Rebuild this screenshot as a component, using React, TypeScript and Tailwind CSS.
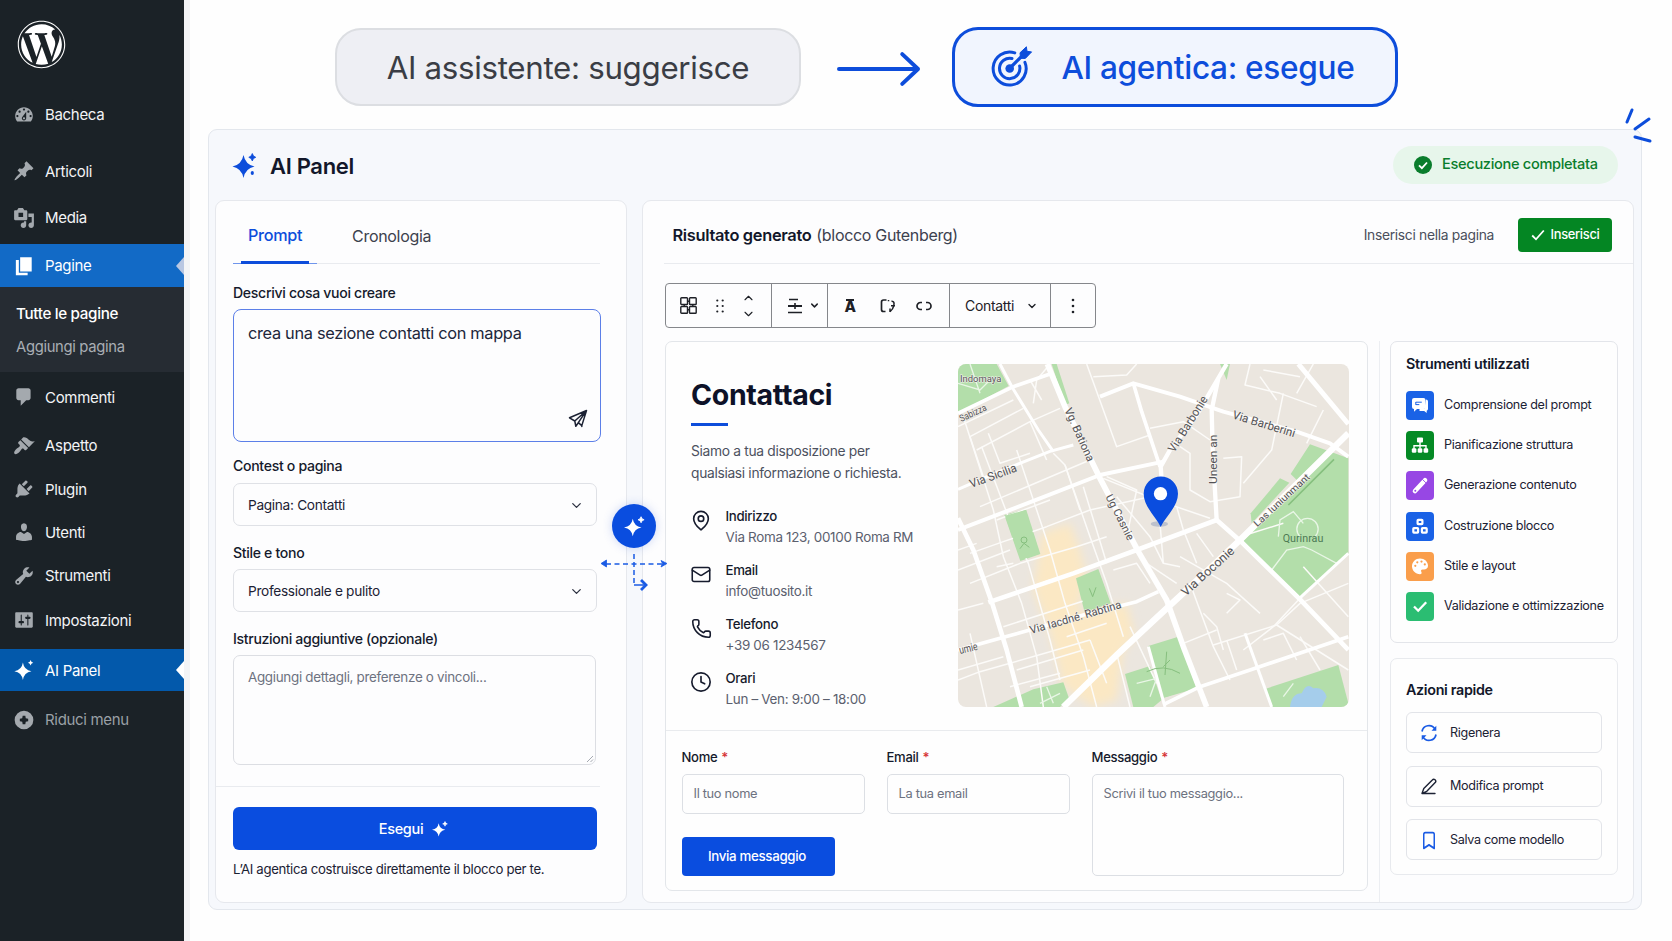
import React from "react";
import { FaWordpress } from "react-icons/fa";
import { ChevronDown, ChevronUp, MapPin, Mail, Phone, Clock, Bookmark } from "lucide-react";

const icons = {
  dashboard:
    "M3.76 16h12.48c1.1-1.37 1.76-3.11 1.76-5 0-4.42-3.58-8-8-8s-8 3.58-8 8c0 1.89.66 3.63 1.76 5zM10 4c.55 0 1 .45 1 1s-.45 1-1 1-1-.45-1-1 .45-1 1-1zM6 6c.55 0 1 .45 1 1s-.45 1-1 1-1-.45-1-1 .45-1 1-1zm8 0c.55 0 1 .45 1 1s-.45 1-1 1-1-.45-1-1 .45-1 1-1zm-5.37 5.55L12 7v6c0 1.1-.9 2-2 2s-2-.9-2-2c0-.57.24-1.08.63-1.45zM4 10c.55 0 1 .45 1 1s-.45 1-1 1-1-.45-1-1 .45-1 1-1zm12 0c.55 0 1 .45 1 1s-.45 1-1 1-1-.45-1-1 .45-1 1-1zm-5 3c0-.55-.45-1-1-1s-1 .45-1 1 .45 1 1 1 1-.45 1-1z",
  post: "M10.44 3.02l1.82-1.82 6.36 6.35-1.83 1.82c-1.05-.68-2.48-.57-3.41.36l-.75.75c-.92.93-1.04 2.35-.35 3.41l-1.83 1.82-2.41-2.41-2.8 2.79c-.42.42-3.38 2.71-3.8 2.29s1.86-3.39 2.28-3.81l2.79-2.79L4.1 9.36l1.83-1.82c1.05.69 2.48.57 3.4-.36l.75-.75c.93-.92 1.05-2.35.36-3.41z",
  media:
    "M13 11V4c0-.55-.45-1-1-1h-1.67L9 1H5L3.67 3H2c-.55 0-1 .45-1 1v7c0 .55.45 1 1 1h10c.55 0 1-.45 1-1zM5 5.200h4.200v4H5zM14 6h5v10.500c0 1.38-1.12 2.500-2.500 2.500S14 17.88 14 16.500s1.12-2.500 2.500-2.500c.17 0 .34.02.5.05V9h-3V6zm-4 8.050V13h2v3.500c0 1.38-1.12 2.500-2.500 2.500S7 17.88 7 16.500 8.120 14 9.500 14c.17 0 .34.02.5.05z",
  page: "M6.500 15V2H17v13H6.500zM5.300 16.200h8V18.400H2.600V4.600h2.700v11.600z",
  comments:
    "M5 2h9c1.1 0 2 .9 2 2v7c0 1.1-.9 2-2 2h-2l-5 5v-5H5c-1.1 0-2-.9-2-2V4c0-1.1.9-2 2-2z",
  appearance:
    "M14.48 11.06L7.41 3.99l1.5-1.5c.5-.56 2.3-.47 3.51.32 1.21.8 1.43 1.28 2.91 2.1 1.18.64 2.45 1.26 4.45.85zm-.71.71L6.7 4.7 4.93 6.47c-.39.39-.39 1.02 0 1.41l1.06 1.06c.39.39.39 1.03 0 1.42-.6.6-1.43 1.11-2.21 1.69-.35.26-.7.53-1.01.84C1.43 14.23.4 16.08 1.4 17.07c.99 1 2.84-.03 4.18-1.36.31-.31.58-.66.85-1.02.57-.78 1.08-1.61 1.69-2.21.39-.39 1.02-.39 1.41 0l1.06 1.06c.39.39 1.02.39 1.41 0z",
  plugins:
    "M13.11 4.36L9.87 7.6 8 5.73l3.24-3.24c.35-.34 1.05-.2 1.56.32.52.51.66 1.21.31 1.55zm-8 1.77l.91-1.12 9.01 9.01-1.19.84c-.71.71-2.63 1.16-3.82 1.16H6.14L4.9 17.26c-.59.59-1.54.59-2.12 0-.59-.58-.59-1.53 0-2.12l1.24-1.24v-3.88c0-1.13.4-3.19 1.09-3.89zm7.26 3.97l3.24-3.24c.34-.35 1.04-.21 1.55.31.52.51.66 1.21.31 1.55l-3.24 3.25z",
  users:
    "M10 9.25c-2.27 0-2.73-3.44-2.73-3.44C7 4.02 7.82 2 9.97 2c2.16 0 2.98 2.02 2.71 3.81 0 0-.41 3.44-2.68 3.44zm0 2.57L12.72 10c2.39 0 4.52 2.33 4.52 4.53v2.49s-3.65 1.13-7.24 1.13c-3.65 0-7.24-1.13-7.24-1.13v-2.49c0-2.25 1.94-4.48 4.47-4.48z",
  tools:
    "M16.68 9.77c-1.34 1.34-3.3 1.67-4.95.99l-5.41 6.52c-.99.99-2.59.99-3.58 0s-.99-2.59 0-3.57l6.52-5.42c-.68-1.65-.35-3.61.99-4.95 1.28-1.28 3.12-1.62 4.72-1.06l-2.89 2.89 2.82 2.82 2.86-2.87c.53 1.58.18 3.39-1.08 4.65zM3.81 16.21c.4.39 1.04.39 1.43 0 .4-.4.4-1.04 0-1.43-.39-.4-1.03-.4-1.43 0-.39.39-.39 1.03 0 1.43z",
  settings:
    "M18 16V4c0-.55-.45-1-1-1H3c-.55 0-1 .45-1 1v12c0 .55.45 1 1 1h14c.55 0 1-.45 1-1zM8 11h1c.55 0 1 .45 1 1s-.45 1-1 1H8v1.5c0 .28-.22.5-.5.5s-.5-.22-.5-.5V13H6c-.55 0-1-.45-1-1s.45-1 1-1h1V5.5c0-.28.22-.5.5-.5s.5.22.5.5V11zm5-2h-1c-.55 0-1-.45-1-1s.45-1 1-1h1V5.5c0-.28.22-.5.5-.5s.5.22.5.5V7h1c.55 0 1 .45 1 1s-.45 1-1 1h-1v5.5c0 .28-.22.5-.5.5s-.5-.22-.5-.5V9z",
  sparkle:
    "M9 3.2Q10 10 16.8 11.2Q10 12.400 9 19.200Q8 12.400 1.200 11.200Q8 10 9 3.200zM16 1Q16.300 3 18.400 3.400Q16.300 3.800 16 5.800Q15.600 3.800 13.600 3.400Q15.700 3 16 1z",
  collapse:
    "M10 1.500a8.500 8.500 0 1 0 0 17a8.500 8.500 0 1 0 0-17zM8.800 6.200h2.400l.4 2.200 2.200.4v2.400l-2.200.4-.4 2.200H8.800l-.4-2.200-2.200-.4V8.800l2.200-.4z",
};

type IconName = keyof typeof icons;

function WpIcon({ name, className }: { name: IconName; className: string }) {
  return (
    <svg viewBox="0 0 20 20" className={className} fill="currentColor" fillRule="evenodd">
      <path d={icons[name]} />
    </svg>
  );
}

function Sparkle({ className }: { className: string }) {
  return (
    <svg viewBox="0 0 24 24" className={className} fill="currentColor">
      <path d="M10 3.200Q11.400 11.700 20 13.200Q11.400 14.700 10 23.200Q8.600 14.700 0 13.200Q8.600 11.700 10 3.200z" />
      <path
        d="M19.500 .8Q20 3.700 23 4.300Q20 4.900 19.500 7.800Q19 4.900 16 4.300Q19 3.700 19.500 .8z"
        stroke="currentColor"
        strokeWidth=".9"
      />
    </svg>
  );
}

interface NavItemProps {
  name: IconName;
  label: string;
  row: string;
  tone?: string;
  icon?: string;
}

function NavItem({ name, label, row, tone = "text-[#f3f4f6]", icon = "text-[#a4a9ae]" }: NavItemProps) {
  return (
    <a className={`relative flex shrink-0 items-center pl-[13px] ${row} ${tone}`}>
      <WpIcon name={name} className={`size-[22px] shrink-0 ${icon}`} />
      <span className="ml-[10px] mt-[2px] text-[15px]">{label}</span>
    </a>
  );
}

function Notch({ className }: { className: string }) {
  return (
    <svg
      viewBox="0 0 8 18"
      className={`absolute right-0 top-1/2 h-[18px] w-2 -translate-y-1/2 ${className}`}
      fill="currentColor"
    >
      <path d="M8 0v18L0 9z" />
    </svg>
  );
}

function Sidebar() {
  return (
    <nav className="flex h-full w-[184px] shrink-0 flex-col bg-[#1b2227]">
      <div className="flex h-[86px] items-start pl-[16.500px] pt-[20px] text-white">
        <FaWordpress className="size-[49px]" />
      </div>
      <NavItem name="dashboard" label="Bacheca" row="h-[57px]" />
      <NavItem name="post" label="Articoli" row="h-[56px]" />
      <NavItem name="media" label="Media" row="h-[37px]" />
      <div className="relative mt-[8px]">
        <NavItem name="page" label="Pagine" row="h-[43px] bg-[#126ac6]" tone="text-white" icon="text-white" />
        <Notch className="text-[#b9c7e2]" />
      </div>
      <div className="flex h-[85px] flex-col bg-[#262c33] pl-[16px] pt-[10px]">
        <a className="flex h-[34px] items-center text-[15.200px] font-medium text-white">Tutte le pagine</a>
        <a className="flex h-[33px] items-center text-[14.800px] text-[#a9aeb4]">Aggiungi pagina</a>
      </div>
      <NavItem name="comments" label="Commenti" row="h-[50px]" />
      <NavItem name="appearance" label="Aspetto" row="h-[47px]" />
      <NavItem name="plugins" label="Plugin" row="h-[40px]" />
      <NavItem name="users" label="Utenti" row="h-[46px]" />
      <NavItem name="tools" label="Strumenti" row="h-[41px]" />
      <NavItem name="settings" label="Impostazioni" row="h-[48px]" />
      <div className="relative mt-[5px]">
        <NavItem name="sparkle" label="AI Panel" row="h-[42px] bg-[#0359ab]" tone="text-white" icon="text-white" />
        <Notch className="text-white" />
      </div>
      <NavItem name="collapse" label="Riduci menu" row="h-[57px]" tone="text-[#9aa0a6]" icon="text-[#a4a9ae]" />
    </nav>
  );
}

function TargetIcon() {
  return (
    <svg
      viewBox="0 0 44 44"
      className="mb-[3px] size-[44px]"
      fill="none"
      stroke="#0d4ddb"
      strokeWidth="3"
      strokeLinecap="round"
    >
      <path d="M25.800 8.900A16.500 16.500 0 1 0 35.900 18.300" />
      <path d="M23 14.500A10.200 10.200 0 1 0 30.600 22" />
      <circle cx="20.700" cy="24.500" r="4.300" fill="#0d4ddb" stroke="none" />
      <path d="M21 24L35 10" strokeWidth="3.200" />
      <path
        d="M31.500 14L31 8.800L37.400 2.800L38 7.300L42.600 7.900L36.600 14.200z"
        fill="#0d4ddb"
        strokeWidth="1"
        strokeLinejoin="round"
      />
    </svg>
  );
}

function TopBanner() {
  return (
    <div className="flex h-[81px] items-center">
      <div className="ml-[127px] mt-px flex h-[78px] w-[466px] items-center justify-center rounded-[26px] border-2 border-[#dcdee2] bg-[#eeeff4] pt-[2px] text-[31.300px] tracking-[-0.01em] text-[#3a3d45]">
        AI assistente: suggerisce
      </div>
      <svg
        viewBox="0 0 86 36"
        className="ml-[36px] mr-px mt-[4px] h-[36px] w-[85px]"
        fill="none"
        stroke="#0d4ddb"
        strokeWidth="4"
        strokeLinecap="round"
        strokeLinejoin="round"
      >
        <path d="M2 18H82M66 3L82 18L66 33" />
      </svg>
      <div className="ml-[29px] flex h-[80px] w-[446px] items-center rounded-[26px] border-[3px] border-[#0d4ddb] bg-[#f1f5fe] pl-[34px] pt-[2px] text-[31.600px] font-medium tracking-[-0.01em] text-[#0d4ddb]">
        <TargetIcon />
        <span className="ml-[28.500px]">AI agentica: esegue</span>
      </div>
    </div>
  );
}

function Label({ className, children }: { className: string; children: React.ReactNode }) {
  return (
    <label
      className={`flex shrink-0 items-end text-[14.100px] font-medium leading-[20px] text-[#151a2c] ${className}`}
    >
      {children}
    </label>
  );
}

function Select({ children }: { children: React.ReactNode }) {
  return (
    <div className="flex h-[43px] w-[364px] shrink-0 items-center justify-between rounded-[7px] border border-[#dfe1e6] pl-[14px] pr-[12px] pt-px text-[13.700px] text-[#1c2234]">
      <span>{children}</span>
      <ChevronDown className="size-[15px] text-[#2b3040]" strokeWidth={2} />
    </div>
  );
}

function PromptCard() {
  return (
    <section className="flex h-[703px] w-[412px] flex-col rounded-[9px] border border-[#e6e8ed] bg-[#fdfdfe] pl-[17px]">
      <div className="relative flex h-[63px] w-[367px] shrink-0 items-center border-b border-[#e9ebef] pl-[15px] text-[16.200px]">
        <span className="mt-[7px] font-medium text-[#0d4ddb]">Prompt</span>
        <span className="ml-[50px] mt-[7px] text-[16px] text-[#3c414d]">Cronologia</span>
        <span className="absolute -bottom-px left-0 h-px w-[84px] bg-[#6f95ec]" />
        <span className="absolute -bottom-px left-[8px] h-[3px] w-[68px] bg-[#0d4ddb]" />
      </div>
      <Label className="h-[45px] pb-[6px]">Descrivi cosa vuoi creare</Label>
      <div className="flex h-[133px] w-[368px] shrink-0 flex-col justify-between rounded-[8px] border-[1.500px] border-[#5c7fe8] pb-[12px] pl-[14px] pr-[12px] pt-[11px] text-[16.350px] text-[#20263a]">
        <p className="leading-[24px]">crea una sezione contatti con mappa</p>
        <svg
          viewBox="0 0 20 20"
          className="size-[20px] self-end"
          fill="none"
          stroke="#1c2234"
          strokeWidth="1.500"
          strokeLinejoin="round"
          strokeLinecap="round"
        >
          <path d="M18.500 1.500L1.500 8.800L6.800 12L18.500 1.500L13.800 16.600L10.300 13.700L7.800 17.300L6.800 12M10.300 13.700L18.500 1.500M13.800 16.600V17.600" />
        </svg>
      </div>
      <Label className="h-[41px] pb-[7px]">Contest o pagina</Label>
      <Select>Pagina: Contatti</Select>
      <Label className="h-[43px] pb-[6px]">Stile e tono</Label>
      <Select>Professionale e pulito</Select>
      <Label className="h-[43px] pb-[6px]">Istruzioni aggiuntive (opzionale)</Label>
      <div className="flex h-[110px] w-[363px] shrink-0 flex-col justify-between rounded-[7px] border border-[#dcdee3] pl-[14px] pt-[11px] text-[13.450px] text-[#6d7280]">
        <p className="leading-[20px]">Aggiungi dettagli, preferenze o vincoli...</p>
        <svg viewBox="0 0 8 8" className="mb-px mr-px size-[8px] self-end" fill="none" stroke="#a5a9b1" strokeWidth="1">
          <path d="M1 7L7 1M4.500 7L7 4.500" />
        </svg>
      </div>
      <div className="-ml-[17px] mt-[21px] h-px w-[384px] shrink-0 bg-[#e9ebef]" />
      <button className="mt-[20px] flex h-[43px] w-[364px] shrink-0 items-center justify-center rounded-[6px] bg-[#0a4ddf] pr-[3px] text-[14.500px] font-medium text-white">
        Esegui
        <Sparkle className="ml-[9px] size-[16px]" />
      </button>
      <p className="mt-[9px] text-[13.200px] leading-[20px] text-[#1b2133]">
        L’AI agentica costruisce direttamente il blocco per te.
      </p>
    </section>
  );
}

function Toolbar() {
  const cell = "flex h-full items-center border-r border-[#85878b]";
  return (
    <div className="ml-px flex h-[45px] w-[431px] items-center rounded-[4px] border border-[#85878b] text-[#1e2026]">
      <div className={`${cell} w-[106px] pl-[14px]`}>
        <svg viewBox="0 0 17 17" className="size-[17px]" fill="none" stroke="currentColor" strokeWidth="1.400">
          <rect x=".8" y=".8" width="6.700" height="6.700" rx=".8" />
          <rect x="9.500" y=".8" width="6.700" height="6.700" rx=".8" />
          <rect x=".8" y="9.500" width="6.700" height="6.700" rx=".8" />
          <rect x="9.500" y="9.500" width="6.700" height="6.700" rx=".8" />
          <path d="M7.500 4.200h2M7.500 12.800h2M4.200 7.500v2M12.800 7.500v2" />
        </svg>
        <svg viewBox="0 0 8 14" className="ml-[19px] h-[14px] w-[8px]" fill="currentColor">
          {[1.5, 7, 12.5].map((y) => (
            <g key={y}>
              <circle cx="1.300" cy={y} r="1.100" />
              <circle cx="6.700" cy={y} r="1.100" />
            </g>
          ))}
        </svg>
        <div className="ml-[17px] flex flex-col items-center gap-[2px]">
          <ChevronUp className="h-[14px] w-[15px]" strokeWidth={1.9} />
          <ChevronDown className="h-[14px] w-[15px]" strokeWidth={1.9} />
        </div>
      </div>
      <div className={`${cell} w-[56px] pl-[15px]`}>
        <svg viewBox="0 0 16 16" className="size-[16px]" stroke="currentColor" strokeWidth="1.600" fill="none">
          <path d="M2 1.500h9M1 14.500h14" strokeWidth="1.500" />
          <path d="M1 8h14" strokeWidth="2" />
          <path d="M8 5v6" />
        </svg>
        <ChevronDown className="ml-[6px] size-[11px]" strokeWidth={3.2} />
      </div>
      <div className={`${cell} w-[122px] pl-[17px]`}>
        <span className="relative mt-[2px] flex w-[10px] justify-center text-[15px] font-extrabold leading-none">
          A
          <span className="absolute top-0 left-[1px] h-[2px] w-[8px] bg-current" />
        </span>
        <svg
          viewBox="0 0 16 14"
          className="ml-[25px] h-[14px] w-[16px]"
          fill="none"
          stroke="currentColor"
          strokeWidth="1.700"
        >
          <path d="M6.500 1H3.500A2 2 0 0 0 1.500 3V10.500A2 2 0 0 0 3.500 12.500H5.500" />
          <path d="M8.500 1V2.200M11.500 2.200C14 2 14.500 4 13.700 6.800C13.200 9.500 12 11 10 12.700M10 9.500V13M11 6.800h4" strokeWidth="1.500" />
        </svg>
        <svg
          viewBox="0 0 16 10"
          className="ml-[20px] h-[10px] w-[16px]"
          fill="none"
          stroke="currentColor"
          strokeWidth="1.700"
        >
          <path d="M6 1.500H4.500A3.500 3.500 0 0 0 4.500 8.500H6M10 1.500H11.500A3.500 3.500 0 0 1 11.500 8.500H10" />
        </svg>
      </div>
      <div className={`${cell} w-[101px] pl-[15px] text-[14px]`}>
        Contatti
        <ChevronDown className="ml-[12px] size-[12px]" strokeWidth={2.7} />
      </div>
      <div className="flex h-full flex-1 items-center justify-center">
        <svg viewBox="0 0 4 16" className="h-[16px] w-[4px]" fill="currentColor">
          <circle cx="2" cy="2" r="1.300" />
          <circle cx="2" cy="8" r="1.300" />
          <circle cx="2" cy="14" r="1.300" />
        </svg>
      </div>
    </div>
  );
}

const minorStreets = [
  "M40 200L130 480L160 620L215 760L260 920L280 1071",
  "M95 290L190 540L235 640L300 870L330 990",
  "M200 300L300 600L345 760L400 920L440 1071",
  "M310 310L345 345L420 560L470 700L520 860",
  "M345 345L390 480M400 410L470 640",
  "M24 230L190 150M60 260L220 175M80 300L240 215L330 175",
  "M60 260L100 380M115 250L150 340L240 310M240 215L290 330",
  "M90 470L420 330M140 510L300 450M60 610L160 575L290 530L420 480L600 440",
  "M24 660L180 600M60 700L210 640L380 590L470 560",
  "M24 780L100 760M180 735L300 690M160 830L440 740M24 960L160 920",
  "M60 850L110 1071M24 990L90 965L180 940L300 905L420 870",
  "M200 960L400 900M240 1010L420 960M180 1010L330 970M350 860L470 820",
  "M410 42L500 290L600 255M450 140L550 100M430 80L530 75L560 42",
  "M600 235L700 215L780 270M690 290L720 310L720 420L780 455L870 440L875 320L820 325",
  "M900 42L885 105L990 130L1100 170M930 80L980 150M940 60L1050 80",
  "M1000 130L965 300L880 400M1090 42L1040 130M1120 180L1070 280",
  "M460 385L620 450L780 505M470 380L560 420L530 560M680 470L700 540L740 640",
  "M500 440L600 560L640 640M560 605L590 640L680 700M740 550L790 620M630 520L640 640L690 650",
  "M690 620L830 700L930 790M760 790L800 830L820 900M830 730L870 750L830 790",
  "M720 700L790 890L840 990M790 885L980 825L1050 760L1195 700M870 560L1000 520",
  "M1050 745L970 830L880 900M980 825L1195 960M1060 650L1195 800M830 870L860 960",
  "M490 660L560 640L600 700M540 830L620 1000M500 910L540 1071M420 870L470 1000",
  "M700 880L800 840M1050 860L1110 960M940 870L1000 850L1040 930",
  "M300 42L260 90L250 160M240 90L275 150M24 600L80 580M140 650L190 640",
];

const mainStreets: [string, number][] = [
  ["M24 190L190 110L300 72", 11],
  ["M150 42L190 118L265 240L310 305", 9],
  ["M292 42L345 170L450 385L565 605L650 750L700 890L770 1071", 17],
  ["M24 418L130 372L300 304L370 285", 9],
  ["M24 540L270 445L450 375L640 335", 12],
  ["M24 505L70 600L125 755L170 900L215 1071", 14],
  ["M115 757L370 670L560 600L800 510", 14],
  ["M24 900L150 865L400 795L560 755L625 725", 11],
  ["M340 1071L500 915L650 775L780 655L870 570L1195 250", 19],
  ["M830 42L740 195L660 300L632 350L635 390", 13],
  ["M805 85L785 180L788 300L800 510", 13],
  ["M450 140L550 100L690 140L820 185L1040 245L1140 280L1195 320", 12],
  ["M550 100L575 185L630 350", 11],
  ["M800 510L870 572L1050 748L1195 900", 14],
  ["M1045 748L1195 610", 9],
  ["M1045 42L1195 222", 15],
  ["M640 1064L750 1010L900 960L1195 860", 11],
  ["M885 850L965 1071", 9],
  ["M595 890L645 1071", 9],
];

interface MapLabelProps {
  x: number;
  y: number;
  r: number;
  size: number;
  length: number;
  children: string;
}

function MapLabel({ x, y, r, size, length, children }: MapLabelProps) {
  return (
    <text
      transform={`translate(${x} ${y}) rotate(${r})`}
      fontSize={size}
      textLength={length}
      lengthAdjust="spacingAndGlyphs"
      fill="#535256"
      stroke="#f5f2ed"
      strokeWidth="3"
      paintOrder="stroke"
      letterSpacing="0"
      className="font-['Roboto']"
    >
      {children}
    </text>
  );
}

function CityMap() {
  return (
    <div className="mt-[22px] h-[343px] w-[391px] overflow-hidden rounded-[8px]">
      <svg viewBox="24 42 1173 1029" className="h-full w-full" preserveAspectRatio="none">
        <defs>
          <filter id="soft" x="-20%" y="-20%" width="140%" height="140%">
            <feGaussianBlur stdDeviation="14" />
          </filter>
        </defs>
        <rect x="24" y="42" width="1173" height="1029" fill="#ebe6df" />
        <g fill="#fbe8c4" filter="url(#soft)">
          <path d="M275 550L360 520L390 600L410 680L380 790L440 780L530 760L555 860L520 900L500 1050L430 1071L340 1010L300 850L250 720z" />
        </g>
        <g fill="#b3deaa">
          <path d="M24 42H140L176 108L24 190z" />
          <path d="M305 42H320L358 160L345 165z" />
          <path d="M163 495L228 477L271 612L211 633z" />
          <path d="M378 685L445 657L482 760L404 787z" />
          <path d="M1080 283L1195 325V612L1050 748L880 572L1050 400L1022 372z" />
          <path d="M902 490L990 385L1018 398L905 520z" />
          <path d="M595 888L685 860L740 1015L637 1045z" />
          <path d="M525 972L600 948L635 1050L610 1071H550z" />
          <path d="M130 1071L250 1018L340 997L357 1045L330 1071z" />
          <path d="M945 1017L1165 945L1195 1060V1071H965z" />
          <path d="M810 42H840L830 90z" />
        </g>
        <path d="M1020 1071Q1025 1030 1055 1030Q1070 995 1090 1015Q1120 1010 1130 1040L1115 1071z" fill="#a5cdeb" />
        <g fill="none" stroke="#fcfbf9" strokeWidth="4.500" strokeLinejoin="round">
          {minorStreets.map((d) => (
            <path key={d} d={d} />
          ))}
        </g>
        <g fill="#b3deaa">
          <path d="M165 497L227 480L269 611L212 630z" />
          <path d="M382 687L444 661L479 760L405 784z" />
          <path d="M608 895L684 866L734 1012L650 1040z" />
        </g>
        <g fill="none" stroke="#e9f6e6" strokeWidth="4">
          <path d="M60 42L90 130M24 100L90 120L130 80M270 1060L330 1030M290 1010L310 1060M560 1000L620 985L600 1040M1000 1040L1030 1000" />
          <path d="M965 660L1010 600L1060 590L1085 600L1160 640M985 560L990 510L1030 485L1060 520M1050 560A32 32 0 1 1 1095 560" />
        </g>
        <g fill="none" stroke="#fff" strokeLinejoin="round">
          {mainStreets.map(([d, w]) => (
            <path key={d} d={d} strokeWidth={w} />
          ))}
        </g>
        <g fill="none" stroke="#86bf7e" strokeWidth="3">
          <path d="M1152 328L1015 465" strokeWidth="5" />
          <circle cx="222" cy="570" r="9" />
          <path d="M222 580L210 596M222 580L238 592M418 715L428 740L438 712M650 905L645 975M590 965Q640 940 690 970M660 930L640 950" />
        </g>
        <MapLabel x={30} y={95} r={0} size={25} length={124}>Indomaya</MapLabel>
        <MapLabel x={34} y={216} r={-25} size={29} length={86}>Sabizza</MapLabel>
        <MapLabel x={64} y={414} r={-20} size={36} length={148}>Via Sicilia</MapLabel>
        <MapLabel x={343} y={180} r={66} size={34} length={172}>Vg. Bationa</MapLabel>
        <MapLabel x={466} y={440} r={63} size={33} length={150}>Ug Casnie</MapLabel>
        <MapLabel x={673} y={310} r={-58} size={36} length={192}>Via Barbonie</MapLabel>
        <MapLabel x={845} y={205} r={17} size={36} length={195}>Via Barberini</MapLabel>
        <MapLabel x={800} y={402} r={-90} size={31} length={148}>Uneen an</MapLabel>
        <MapLabel x={922} y={532} r={-43} size={29} length={218}>Las Iuniunmant</MapLabel>
        <MapLabel x={707} y={740} r={-42} size={37} length={200}>Via Boconie</MapLabel>
        <MapLabel x={243} y={852} r={-16} size={34} length={284}>Via Iacdné. Rabtina</MapLabel>
        <MapLabel x={30} y={912} r={-13} size={33} length={56}>umie</MapLabel>
        <text x="998" y="575" fontSize="31" textLength="122" lengthAdjust="spacingAndGlyphs" letterSpacing="0" fill="#4d7a55" className="font-['Roboto']">
          Qurinrau
        </text>
        <ellipse cx="628" cy="522" rx="26" ry="8" fill="#9fa9c0" opacity=".6" />
        <path d="M632 531C618 500 581 470 581 431A51.500 51.500 0 0 1 684 431C684 470 646 500 632 531z" fill="#0a4ddf" />
        <circle cx="631.500" cy="431" r="20" fill="#fff" />
      </svg>
    </div>
  );
}

const contacts = [
  { Icon: MapPin, title: "Indirizzo", value: "Via Roma 123, 00100 Roma RM", cls: "h-[23px] w-[22px]" },
  { Icon: Mail, title: "Email", value: "info@tuosito.it", cls: "h-[21px] w-[22px]" },
  { Icon: Phone, title: "Telefono", value: "+39 06 1234567", cls: "size-[21px]" },
  { Icon: Clock, title: "Orari", value: "Lun – Ven: 9:00 – 18:00", cls: "size-[22px]" },
];

function FormLabel({ children }: { children: string }) {
  return (
    <span className="flex h-[43px] items-center pt-[11px] text-[13.100px] font-medium text-[#151a2c]">
      {children} <span className="ml-[4px] font-semibold text-[#d63638]">*</span>
    </span>
  );
}

function ContactBlock() {
  const field = "rounded-[5px] border border-[#dcdfe4] pl-[11px] text-[12.850px] text-[#6d7280]";
  return (
    <div className="h-[550px] w-[703px] rounded-[7px] border border-[#e3e6ea] bg-[#fefefe]">
      <div className="flex h-[388px] pl-[25px]">
        <div className="w-[267px] pt-[35px]">
          <h2 className="text-[28.500px] font-bold leading-[36px] text-[#0d1228]">Contattaci</h2>
          <div className="mt-[10px] h-[3px] w-[37px] bg-[#0d4ddb]" />
          <p className="mt-[15px] text-[13.800px] leading-[21.500px] text-[#4c515e]">
            Siamo a tua disposizione per
            <br />
            qualsiasi informazione o richiesta.
          </p>
          <div className="mt-[22px] flex flex-col gap-[13px]">
            {contacts.map(({ Icon, title, value, cls }) => (
              <div key={title} className="flex h-[41px]">
                <div className="-ml-px mt-[3px] flex h-[22px] w-[22px] items-center justify-center">
                  <Icon className={`shrink-0 text-[#161b2d] ${cls}`} strokeWidth={1.8} />
                </div>
                <div className="ml-[13.500px] leading-[20.500px]">
                  <div className="text-[13.250px] font-medium text-[#151a2c]">{title}</div>
                  <div className="text-[13.450px] text-[#5b606e]">{value}</div>
                </div>
              </div>
            ))}
          </div>
        </div>
        <CityMap />
      </div>
      <div className="flex border-t border-[#e9ebee] pl-[15.500px]">
        <div className="w-[183px]">
          <FormLabel>Nome</FormLabel>
          <div className={`flex h-[40px] items-center ${field}`}>Il tuo nome</div>
          <button className="mt-[23px] flex h-[39px] w-[153px] items-center justify-center rounded-[4px] bg-[#0a4ddf] pr-[2px] text-[13.300px] font-medium text-white">
            Invia messaggio
          </button>
        </div>
        <div className="ml-[22px] w-[183px]">
          <FormLabel>Email</FormLabel>
          <div className={`flex h-[40px] items-center ${field}`}>La tua email</div>
        </div>
        <div className="ml-[22px] w-[252px]">
          <FormLabel>Messaggio</FormLabel>
          <div className={`h-[102px] pt-[9px] leading-[20px] ${field}`}>Scrivi il tuo messaggio...</div>
        </div>
      </div>
    </div>
  );
}

const tools = [
  {
    label: "Comprensione del prompt",
    bg: "bg-[#1a62e6]",
    art: (
      <>
        <path d="M8 7h9.500a2 2 0 0 1 2 2v7a2 2 0 0 1-2 2H11l-3 2.800V18a2 2 0 0 1-2-2V9a2 2 0 0 1 2-2z" fill="#fff" />
        <path
          d="M20 8.500a2 2 0 0 1 2 2V18a2 2 0 0 1-1.300 1.800V22l-2.500-1.900H13.500V17.500H18.500z"
          fill="#fff"
        />
        <path d="M9.800 11.200h6M9.800 13.600h3.500M9.800 11v2.800" stroke="#1a62e6" strokeWidth="1" />
      </>
    ),
  },
  {
    label: "Pianificazione struttura",
    bg: "bg-[#058a25]",
    art: (
      <g fill="#fff">
        <rect x="11" y="6.500" width="6" height="5" rx="1" />
        <path d="M14 11v6.500M8 18v-3.300h12V18" stroke="#fff" strokeWidth="1.400" fill="none" />
        <rect x="5.800" y="17.300" width="4.600" height="4.400" rx="1.300" />
        <rect x="11.700" y="17.300" width="4.600" height="4.400" rx="1.300" />
        <rect x="17.600" y="17.300" width="4.600" height="4.400" rx="1.300" />
      </g>
    ),
  },
  {
    label: "Generazione contenuto",
    bg: "bg-[#9747e4]",
    art: (
      <>
        <path d="M9 20L19 9.300" stroke="#fff" strokeWidth="4.600" strokeLinecap="round" />
        <path d="M16.300 8.300L20 11.900" stroke="#9747e4" strokeWidth=".9" />
        <circle cx="9.300" cy="19.700" r="1" fill="#9747e4" />
      </>
    ),
  },
  {
    label: "Costruzione blocco",
    bg: "bg-[#1a62e6]",
    art: (
      <g fill="none" stroke="#fff" strokeWidth="2.200">
        <rect x="11.600" y="7.800" width="4.800" height="4.300" rx=".6" />
        <rect x="7.300" y="16.200" width="4.800" height="4.500" rx=".6" />
        <rect x="15.900" y="16.200" width="4.800" height="4.500" rx=".6" />
      </g>
    ),
  },
  {
    label: "Stile e layout",
    bg: "bg-[#fa9e4b]",
    art: (
      <>
        <path
          d="M14 6.500c4.500 0 8 3.200 8 7.300 0 2.500-2 3.700-4 3.700h-1.500c-1.500 0-1.800 1.200-1.200 2.200.8 1.400.2 2.500-1.300 2.500-4.500 0-8-3.500-8-7.900s3.500-7.800 8-7.800z"
          fill="#fff"
        />
        <g fill="#fa9e4b">
          <circle cx="9.300" cy="13.800" r="1.100" />
          <circle cx="11.300" cy="10.300" r="1.100" />
          <circle cx="15.500" cy="9.600" r="1.100" />
          <circle cx="18.800" cy="12.400" r="1.100" />
        </g>
      </>
    ),
  },
  {
    label: "Validazione e ottimizzazione",
    bg: "bg-[#2bbd72]",
    art: <path d="M8 14.500L12.200 18.700L20.200 10.300" fill="none" stroke="#fff" strokeWidth="2.300" />,
  },
];

function Tools() {
  return (
    <div className="h-[302px] w-[228px] rounded-[7px] border border-[#e3e5ea] bg-[#fefefe] pl-[15px] pt-[11px]">
      <h3 className="text-[14.300px] font-semibold leading-[22px] text-[#12172a]">Strumenti utilizzati</h3>
      <ul className="mt-[16px] flex flex-col gap-[11.200px]">
        {tools.map((t) => (
          <li key={t.label} className="flex h-[29px] items-center text-[12.600px] text-[#1c2234]">
            <svg viewBox="0 0 28 29" className={`h-[29px] w-[28px] rounded-[4px] ${t.bg}`}>
              {t.art}
            </svg>
            <span className="ml-[10px] whitespace-nowrap">{t.label}</span>
          </li>
        ))}
      </ul>
    </div>
  );
}

function QuickActions() {
  const row =
    "flex h-[41px] w-[196px] items-center rounded-[6px] border border-[#e2e4e9] pl-[13px] pt-px text-[12.600px] text-[#1c2234]";
  return (
    <div className="mt-[15px] h-[217px] w-[228px] rounded-[7px] border border-[#e8eaee] bg-[#fefefe] pl-[15px] pt-[20px]">
      <h3 className="text-[14.300px] font-semibold leading-[22px] text-[#12172a]">Azioni rapide</h3>
      <div className="mt-[11px] flex flex-col gap-[12.500px]">
        <button className={row}>
          <svg viewBox="0 0 18 18" className="size-[18px]" fill="none" stroke="#1a5be4" strokeWidth="1.700">
            <path d="M2 7.500A7 7 0 0 1 15 5.200M16 10.500A7 7 0 0 1 3 12.800" />
            <path d="M16.300 1.800V6.800H11.500zM1.700 16.200V11.200H6.500z" fill="#1a5be4" stroke="none" />
          </svg>
          <span className="ml-[12px]">Rigenera</span>
        </button>
        <button className={row}>
          <svg
            viewBox="0 0 18 18"
            className="size-[18px]"
            fill="none"
            stroke="#1c2234"
            strokeWidth="1.400"
            strokeLinejoin="round"
            strokeLinecap="round"
          >
            <path d="M2 15.500L3.800 10.500L12.300 2A1.700 1.700 0 0 1 15.200 4.600L6.800 13.300zM2 15.500H15" />
          </svg>
          <span className="ml-[12px]">Modifica prompt</span>
        </button>
        <button className={row}>
          <Bookmark className="h-[21px] w-[18px] text-[#1a5be4]" strokeWidth={2} preserveAspectRatio="none" />
          <span className="ml-[12px]">Salva come modello</span>
        </button>
      </div>
    </div>
  );
}

function ResultCard() {
  return (
    <section className="flex h-[703px] w-[992px] flex-col rounded-[9px] border border-[#e6e8ed] bg-[#fdfdfe] pl-[21px]">
      <header className="flex h-[63px] shrink-0 items-center border-b border-[#e9ebef] pl-[8.500px] pr-[21px] pt-[6px]">
        <h2 className="text-[16.400px] font-semibold text-[#12172a]">Risultato generato</h2>
        <span className="ml-[5px] text-[16px] text-[#3c414f]">(blocco Gutenberg)</span>
        <span className="ml-auto text-[13.850px] text-[#4a4f5c]">Inserisci nella pagina</span>
        <button className="ml-[24px] flex h-[34px] w-[94px] items-center justify-center rounded-[4px] bg-[#048623] text-[12.900px] font-medium text-white">
          <svg
            viewBox="0 0 14 12"
            className="mr-[6px] h-[12px] w-[14px]"
            fill="none"
            stroke="currentColor"
            strokeWidth="1.800"
          >
            <path d="M1.200 6.500L5 10.300L12.800 1.500" />
          </svg>
          Inserisci
        </button>
      </header>
      <div className="pt-[19px]">
        <Toolbar />
      </div>
      <div className="mt-[13px] flex flex-1 items-start">
        <div className="w-[715px] pl-px">
          <ContactBlock />
        </div>
        <aside className="h-full border-l border-[#eceef2] pl-[10px]">
          <Tools />
          <QuickActions />
        </aside>
      </div>
    </section>
  );
}

function AgentBridge() {
  return (
    <div className="absolute left-[385px] top-[304px] flex w-[68px] flex-col items-center">
      <div className="flex size-[44px] items-center justify-center rounded-full bg-[#0a4ddf] text-white shadow-[0_0_10px_rgba(60,100,220,0.25)]">
        <Sparkle className="size-[21px]" />
      </div>
      <svg viewBox="0 0 68 46" className="h-[46px] w-[68px]" fill="none" stroke="#1a5be4" strokeWidth="1.500">
        <path d="M6 16H62" strokeDasharray="5 3.500" />
        <path d="M34 6V36" strokeDasharray="5 3" />
        <path d="M34 37H44" />
        <path d="M1 15.500L6.500 12V19z M67 15.500L61 12.500L62.500 15.500L61 19z" fill="#1a5be4" strokeWidth=".8" />
        <path d="M41 32L46 37L41 42" strokeWidth="2.800" />
      </svg>
    </div>
  );
}

export default function App() {
  return (
    <div className="flex h-[941px] w-[1672px] overflow-hidden bg-[#fefefe] font-['Inter',sans-serif] tracking-[-0.02em]">
      <Sidebar />
      <div className="w-[6px] shrink-0 bg-[#f3f4f6]" />
      <main className="flex flex-1 flex-col pl-[18px] pt-[26px]">
        <TopBanner />
        <div className="relative mt-[22px] h-[781px] w-[1434px] rounded-[9px] border border-[#e3e7ed] bg-[#f6f8fc] pl-[6px]">
          <svg
            viewBox="0 0 30 36"
            className="absolute -right-[12px] -top-[22px] h-[36px] w-[30px]"
            fill="none"
            stroke="#0d4ddb"
            strokeWidth="3"
            strokeLinecap="round"
          >
            <path d="M9 2L4 14M26 11L12 21M12 29L27 33" />
          </svg>
          <div className="flex h-[70px] items-center pr-[23px] pt-[2px]">
            <svg viewBox="0 0 26 28" className="ml-[16px] h-[28px] w-[26px]" fill="#0d4ddb">
              <path d="M12.500 3Q14.300 12.600 23.500 14.500Q14.300 16.400 12.500 26Q10.700 16.400 1.500 14.500Q10.700 12.600 12.500 3z" />
              <path
                d="M21.300 1.500Q21.900 4.500 24.800 5.300Q21.900 6 21.300 9Q20.700 6 17.800 5.300Q20.700 4.500 21.300 1.500z"
                stroke="#0d4ddb"
                strokeWidth=".8"
              />
              <ellipse cx="21.300" cy="21" rx="1.600" ry="2" />
            </svg>
            <h1 className="ml-[13px] text-[22px] font-semibold text-[#12172a]">AI Panel</h1>
            <div className="-mt-[2px] ml-auto flex h-[38px] w-[225px] items-center rounded-full bg-[#e7f6eb] pl-[21px] text-[14.600px] font-medium text-[#0a7d2c]">
              <svg viewBox="0 0 18 18" className="mr-[10px] size-[18px]">
                <circle cx="9" cy="9" r="9" fill="#0a7d2c" />
                <path d="M5 9.300L7.900 12.200L13 6.500" fill="none" stroke="#fff" strokeWidth="1.800" />
              </svg>
              Esecuzione completata
            </div>
          </div>
          <div className="relative flex gap-[15px]">
            <PromptCard />
            <ResultCard />
            <AgentBridge />
          </div>
        </div>
      </main>
    </div>
  );
}
